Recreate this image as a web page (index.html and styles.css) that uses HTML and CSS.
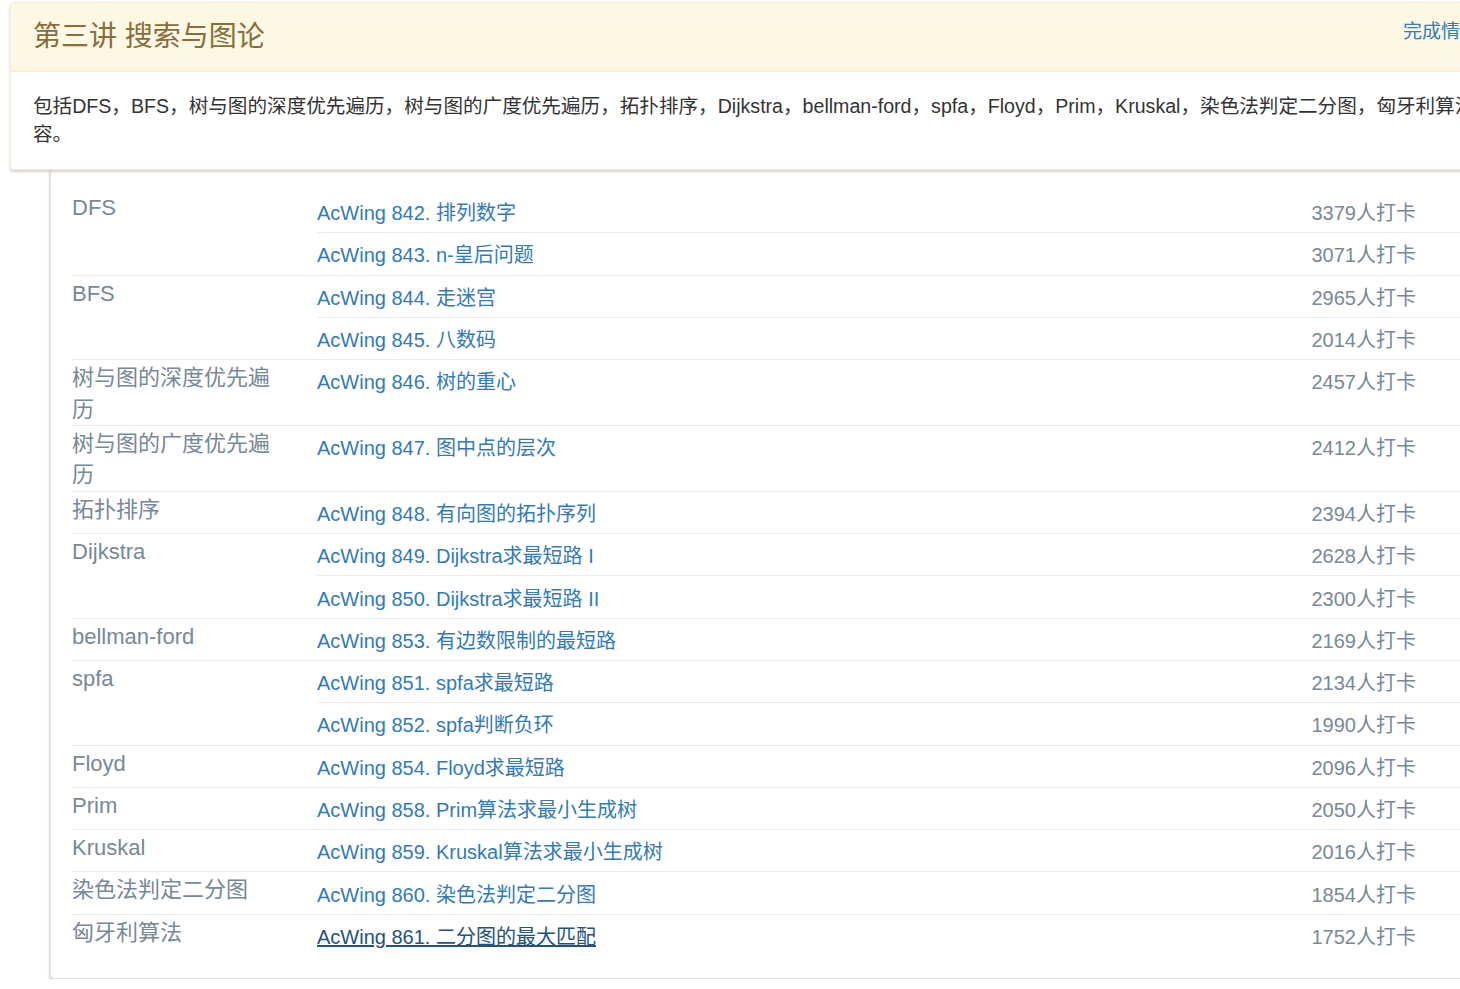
FILE: index.html
```html
<!DOCTYPE html>
<html lang="zh-CN">
<head>
<meta charset="utf-8">
<title>第三讲 搜索与图论</title>
<link rel="stylesheet" href="styles.css">
</head>
<body>
<div class="page">
  <div class="panel">
    <div class="panel-heading">
      <h3 class="panel-title">第三讲 搜索与图论</h3>
      <a class="status-link" href="#">完成情况</a>
    </div>
    <div class="panel-body">包括DFS，BFS，树与图的深度优先遍历，树与图的广度优先遍历，拓扑排序，Dijkstra，bellman-ford，spfa，Floyd，Prim，Kruskal，染色法判定二分图，匈牙利算法等内容。</div>
  </div>

  <div class="card">
    <div class="group">
      <div class="label">DFS</div>
      <div class="items">
        <div class="item"><a href="#">AcWing 842. 排列数字</a><span class="count">3379人打卡</span></div>
        <div class="item"><a href="#">AcWing 843. n-皇后问题</a><span class="count">3071人打卡</span></div>
      </div>
    </div>
    <div class="group">
      <div class="label">BFS</div>
      <div class="items">
        <div class="item"><a href="#">AcWing 844. 走迷宫</a><span class="count">2965人打卡</span></div>
        <div class="item"><a href="#">AcWing 845. 八数码</a><span class="count">2014人打卡</span></div>
      </div>
    </div>
    <div class="group">
      <div class="label">树与图的深度优先遍历</div>
      <div class="items">
        <div class="item"><a href="#">AcWing 846. 树的重心</a><span class="count">2457人打卡</span></div>
      </div>
    </div>
    <div class="group">
      <div class="label">树与图的广度优先遍历</div>
      <div class="items">
        <div class="item"><a href="#">AcWing 847. 图中点的层次</a><span class="count">2412人打卡</span></div>
      </div>
    </div>
    <div class="group">
      <div class="label">拓扑排序</div>
      <div class="items">
        <div class="item"><a href="#">AcWing 848. 有向图的拓扑序列</a><span class="count">2394人打卡</span></div>
      </div>
    </div>
    <div class="group">
      <div class="label">Dijkstra</div>
      <div class="items">
        <div class="item"><a href="#">AcWing 849. Dijkstra求最短路 I</a><span class="count">2628人打卡</span></div>
        <div class="item"><a href="#">AcWing 850. Dijkstra求最短路 II</a><span class="count">2300人打卡</span></div>
      </div>
    </div>
    <div class="group">
      <div class="label">bellman-ford</div>
      <div class="items">
        <div class="item"><a href="#">AcWing 853. 有边数限制的最短路</a><span class="count">2169人打卡</span></div>
      </div>
    </div>
    <div class="group">
      <div class="label">spfa</div>
      <div class="items">
        <div class="item"><a href="#">AcWing 851. spfa求最短路</a><span class="count">2134人打卡</span></div>
        <div class="item"><a href="#">AcWing 852. spfa判断负环</a><span class="count">1990人打卡</span></div>
      </div>
    </div>
    <div class="group">
      <div class="label">Floyd</div>
      <div class="items">
        <div class="item"><a href="#">AcWing 854. Floyd求最短路</a><span class="count">2096人打卡</span></div>
      </div>
    </div>
    <div class="group">
      <div class="label">Prim</div>
      <div class="items">
        <div class="item"><a href="#">AcWing 858. Prim算法求最小生成树</a><span class="count">2050人打卡</span></div>
      </div>
    </div>
    <div class="group">
      <div class="label">Kruskal</div>
      <div class="items">
        <div class="item"><a href="#">AcWing 859. Kruskal算法求最小生成树</a><span class="count">2016人打卡</span></div>
      </div>
    </div>
    <div class="group">
      <div class="label">染色法判定二分图</div>
      <div class="items">
        <div class="item"><a href="#">AcWing 860. 染色法判定二分图</a><span class="count">1854人打卡</span></div>
      </div>
    </div>
    <div class="group">
      <div class="label">匈牙利算法</div>
      <div class="items">
        <div class="item"><a class="hover" href="#">AcWing 861. 二分图的最大匹配</a><span class="count">1752人打卡</span></div>
      </div>
    </div>
  </div>
</div>
</body>
</html>
```

FILE: styles.css
```css
html, body {
  margin: 0;
  padding: 0;
  overflow: hidden;
  background: #fff;
}

body {
  font-family: "Liberation Sans", Arial, "Noto Sans CJK SC", sans-serif;
  color: #333;
}

a {
  color: #337ab7;
  text-decoration: none;
}

.page {
  width: 1570px;
  padding: 2px 0 0 10px;
}

.panel {
  position: relative;
  z-index: 2;
  width: 1544px;
  background: #fff;
  border: 1px solid #faebcc;
  border-radius: 4px;
  box-shadow: 0 2px 3px rgba(0, 0, 0, 0.18);
}

.panel-heading {
  display: flex;
  justify-content: space-between;
  align-items: flex-start;
  height: 68px;
  padding: 0 22px;
  background: #fcf8e3;
  border-bottom: 1px solid #faebcc;
  border-radius: 3px 3px 0 0;
}

.panel-title {
  margin: 0;
  font-size: 28px;
  font-weight: normal;
  line-height: 68px;
  color: #8a6d3b;
}

.status-link {
  margin: 16px 0 0 0;
  font-size: 19px;
  line-height: 26px;
  width: 130px;
}

.panel-body {
  padding: 20px 22px 21px 22px;
  font-size: 19.6px;
  line-height: 28px;
  color: #333;
}

.card {
  position: relative;
  z-index: 1;
  width: 1480px;
  margin-left: 40px;
  padding: 20px 0 22px 21px;
  background: #fff;
  border: 1px solid #e4e4e4;
  border-top: none;
  border-radius: 0 0 4px 4px;
  box-shadow: 0 2px 3px rgba(0, 0, 0, 0.3);
}

.group {
  display: flex;
  align-items: flex-start;
  border-top: 1px solid #eee;
}

.group:first-child {
  border-top: none;
}

.label {
  flex: 0 0 245px;
  box-sizing: border-box;
  padding: 2px 30px 0 0;
  font-size: 22px;
  line-height: 31.4px;
  color: #778899;
}

.items {
  flex: 1;
  display: flex;
  flex-direction: column;
}

.item {
  display: flex;
  align-items: center;
  justify-content: space-between;
  height: 41.3px;
  padding-right: 136px;
  border-top: 1px solid #eee;
  font-size: 20px;
}

.item:first-child {
  border-top: none;
}

.group:first-child .item:first-child {
  height: 42.3px;
}

.item a.hover {
  color: #23527c;
  text-decoration: underline;
}

.count {
  color: #778899;
}
```
